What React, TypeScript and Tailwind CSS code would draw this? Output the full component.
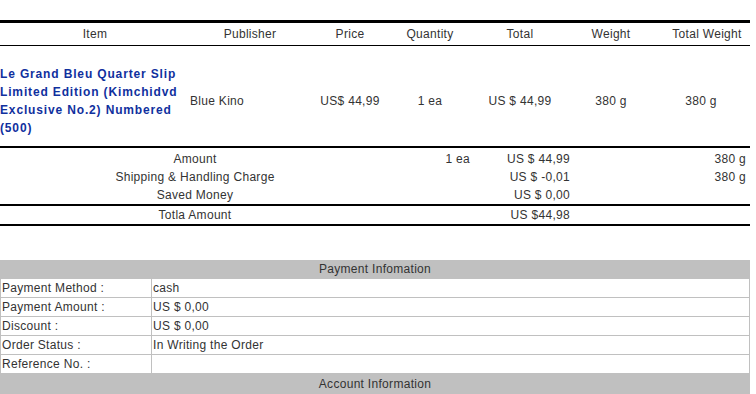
import React from 'react';

const font = { fontFamily: '"Liberation Sans", Arial, sans-serif' };

const cols = 'grid grid-cols-[190px_120px_80px_80px_100px_82px_98px]';
const sumCols = 'grid grid-cols-[390px_80px_100px_180px] h-[18px] items-center';

const PaymentRow = ({ label, value }: { label: string; value: string }) => (
  <div className="grid grid-cols-[150px_1fr] gap-px h-[18px]">
    <div className="bg-white pl-px leading-[18px]">{label}</div>
    <div className="bg-white pl-px leading-[18px]">{value}</div>
  </div>
);

const App = () => {
  return (
    <div className="min-h-screen bg-white pt-[20px] text-[12px] tracking-[0.3px] text-[#333]" style={font}>
      <div className="w-[750px]">
        {/* order items */}
        <div className="border-t-[3px] border-black">
          <div className={`${cols} h-[23px] items-center text-center border-b border-black`}>
            <div>Item</div>
            <div>Publisher</div>
            <div>Price</div>
            <div>Quantity</div>
            <div>Total</div>
            <div>Weight</div>
            <div className="pl-[12px]">Total Weight</div>
          </div>
          <div className={`${cols} h-[102px] pt-[9px] items-center text-center border-b-2 border-black`}>
            <div className="text-left w-[182px] font-bold text-[#10309e] leading-[18px] tracking-[0.85px]">
              Le Grand Bleu Quarter Slip Limited Edition (Kimchidvd Exclusive No.2) Numbered (500)
            </div>
            <div className="text-left">Blue Kino</div>
            <div>US$ 44,99</div>
            <div>1 ea</div>
            <div>US $ 44,99</div>
            <div>380 g</div>
            <div>380 g</div>
          </div>
        </div>

        {/* summary */}
        <div className="pt-[2px]">
          <div className={sumCols}>
            <div className="text-center">Amount</div>
            <div className="text-right">1 ea</div>
            <div className="text-right">US $ 44,99</div>
            <div className="text-right pr-[4px]">380 g</div>
          </div>
          <div className={sumCols}>
            <div className="text-center">Shipping &amp; Handling Charge</div>
            <div></div>
            <div className="text-right">US $ -0,01</div>
            <div className="text-right pr-[4px]">380 g</div>
          </div>
          <div className={`${sumCols} border-b-2 border-black h-[20px]`}>
            <div className="text-center">Saved Money</div>
            <div></div>
            <div className="text-right">US $ 0,00</div>
            <div></div>
          </div>
          <div className={`${sumCols} h-[20px] border-b-2 border-black`}>
            <div className="text-center">Totla Amount</div>
            <div></div>
            <div className="text-right">US $44,98</div>
            <div></div>
          </div>
        </div>

        {/* payment info */}
        <div className="mt-[34px] bg-[#c0c0c0] p-px flex flex-col gap-px">
          <div className="h-[17px] leading-[17px] text-center">Payment Infomation</div>
          <PaymentRow label="Payment Method :" value="cash" />
          <PaymentRow label="Payment Amount :" value="US $ 0,00" />
          <PaymentRow label="Discount :" value="US $ 0,00" />
          <PaymentRow label="Order Status :" value="In Writing the Order" />
          <PaymentRow label="Reference No. :" value="" />
          <div className="h-[20px] pt-px leading-[18px] text-center">Account Information</div>
        </div>
      </div>
    </div>
  );
};

export default App;
